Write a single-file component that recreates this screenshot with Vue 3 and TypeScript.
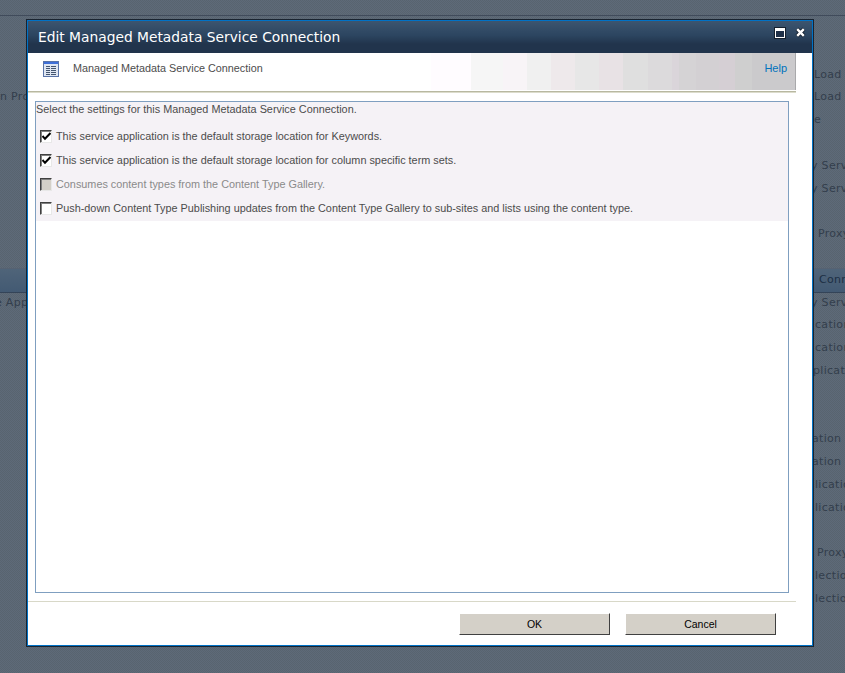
<script setup lang="ts">
interface BgRow { text: string; x: number; cls?: string }
const rightRows: BgRow[] = [
  { text: 'Load', x: 814 }, { text: 'Load', x: 814 }, { text: 'e', x: 814 }, { text: '', x: 0 },
  { text: 'y Serv', x: 811 }, { text: 'y Serv', x: 811 }, { text: '', x: 0 },
  { text: 'Proxy', x: 818 }, { text: '', x: 0 }, { text: 'Conn', x: 819, cls: 'sel' },
  { text: 'y Serv', x: 811 }, { text: 'cation', x: 815 }, { text: 'cation', x: 815 },
  { text: 'plication', x: 813 }, { text: '', x: 0 }, { text: '', x: 0 },
  { text: 'ation', x: 812 }, { text: 'ation', x: 812 }, { text: 'lication', x: 815 },
  { text: 'lication', x: 815 }, { text: '', x: 0 }, { text: 'Proxy', x: 817 },
  { text: 'lection', x: 815 }, { text: 'lection', x: 815 }
]
const settings = [
  { label: 'This service application is the default storage location for Keywords.', checked: true, disabled: false },
  { label: 'This service application is the default storage location for column specific term sets.', checked: true, disabled: false },
  { label: 'Consumes content types from the Content Type Gallery.', checked: false, disabled: true },
  { label: 'Push-down Content Type Publishing updates from the Content Type Gallery to sub-sites and lists using the content type.', checked: false, disabled: false }
]
const bands = [
  { c: '#fffcff', w: 40 }, { c: '#f6f6f6', w: 32 }, { c: '#f8f4f7', w: 24 }, { c: '#f0f0f0', w: 24 },
  { c: '#eee9eb', w: 24 }, { c: '#e7e7e7', w: 24 }, { c: '#e8e2e5', w: 24 }, { c: '#dfdfdf', w: 25 },
  { c: '#dcdadc', w: 24 }, { c: '#dad5da', w: 7 }, { c: '#d5d3d5', w: 17 }, { c: '#d3d0d3', w: 23 },
  { c: '#d5cfd4', w: 16 }, { c: '#cfcfcf', w: 17 }, { c: '#cbcacc', w: 43 }
]
</script>

<template>
  <div class="page">
    <div class="backdrop">
      <div class="top-bar"></div>
      <div class="bg-rows">
        <div v-for="(r, i) in rightRows" :key="i" class="bg-row" :class="r.cls">
          <span v-if="i === 1" class="bg-left">n Proxy</span>
          <span v-if="i === 10" class="bg-left app">e App</span>
          <span v-if="r.text" class="bg-right" :style="{ left: r.x + 'px' }">{{ r.text }}</span>
        </div>
      </div>
    </div>

    <section class="dialog">
      <header class="titlebar">
        <h1>Edit Managed Metadata Service Connection</h1>
        <div class="win-btns">
          <svg width="12" height="12" viewBox="0 0 12 12">
            <rect x="0.5" y="0.5" width="11" height="11" fill="#fff" stroke="#14202e" />
            <rect x="2" y="4" width="8" height="6" fill="#1e3048" />
          </svg>
          <svg width="11" height="11" viewBox="0 0 11 11">
            <path d="M2 2 L9 9 M9 2 L2 9" stroke="#14202e" stroke-width="4" />
            <path d="M2.2 2.2 L8.8 8.8 M8.8 2.2 L2.2 8.8" stroke="#fff" stroke-width="2.4" />
          </svg>
        </div>
      </header>

      <div class="info-band">
        <svg class="list-icon" width="16" height="16" viewBox="0 0 16 16">
          <rect x="0.5" y="0.5" width="15" height="15" fill="#dfe6f2" stroke="#5a74a8" />
          <rect x="1" y="1" width="14" height="2" fill="#3f6fd8" />
          <path d="M3 5.5h4M8 5.5h5M3 7.5h4M8 7.5h5M3 9.5h4M8 9.5h5M3 11.5h4M8 11.5h5M3 13.5h4M8 13.5h5" stroke="#44556f" stroke-width="1" />
        </svg>
        <span class="info-title">Managed Metadata Service Connection</span>
        <div class="shade">
          <i v-for="(b, i) in bands" :key="i" :style="{ background: b.c, width: b.w + 'px' }"></i>
        </div>
        <a class="help">Help</a>
      </div>
      <div class="rule-olive"></div>

      <div class="frame">
        <div class="settings">
          <p class="intro">Select the settings for this Managed Metadata Service Connection.</p>
          <label v-for="s in settings" :key="s.label" class="setting" :class="{ off: s.disabled }">
            <span class="box" :class="{ 'box-off': s.disabled }">
              <svg v-if="s.checked" width="9" height="9" viewBox="0 0 9 9">
                <path d="M0.5 4 L3 6.8 L8.5 1" fill="none" stroke="#000" stroke-width="2" />
              </svg>
            </span>
            <span>{{ s.label }}</span>
          </label>
        </div>
      </div>

      <div class="rule-foot"></div>
      <footer class="actions">
        <button type="button">OK</button>
        <button type="button">Cancel</button>
      </footer>
    </section>
  </div>
</template>

<style>
html, body { margin: 0; background: #5b6776; overflow: hidden; }
</style>

<style scoped>
.page {
  position: relative;
  width: 845px;
  height: 673px;
  overflow: hidden;
  font-family: "Liberation Sans", Arial, sans-serif;
}
.backdrop {
  height: 673px;
  background-color: #5b6776;
  background-image: repeating-conic-gradient(#5e6a79 0 25%, #58646f 0 50%);
  background-size: 2px 2px;
}
.top-bar { height: 15px; border-bottom: 1px solid #404b5b; }
.bg-rows { padding-top: 47.6px; }
.bg-row {
  position: relative;
  height: 22.8px;
  line-height: 22.8px;
  font-family: "DejaVu Sans", sans-serif;
  font-size: 11px;
  letter-spacing: 0.3px;
  color: #333e4c;
  white-space: nowrap;
}
.bg-right { position: absolute; top: 0; }
.bg-left { position: absolute; left: 0; top: 0; }
.bg-left.app { left: -5px; }
.sel {
  background: linear-gradient(#4f6479, #435a73);
  box-shadow: 0 -1px 0 #566272, 0 1px 0 #344458;
  color: #1c2f44;
}

.dialog {
  position: absolute;
  left: 27px;
  top: 20px;
  width: 786px;
  height: 626px;
  box-sizing: border-box;
  display: flex;
  flex-direction: column;
  background: #fff;
  border: 1px solid #0072c6;
  outline: 1px solid #1a2430;
}
.titlebar {
  flex: none;
  height: 32px;
  display: flex;
  align-items: center;
  justify-content: space-between;
  padding: 0 6px 0 10px;
  background: linear-gradient(#3c556f 0, #2c4560 45%, #21344c 72%, #21344c 100%);
}
.titlebar h1 {
  margin: 0;
  font-family: "DejaVu Sans", sans-serif;
  font-weight: normal;
  font-size: 13.8px;
  color: #fff;
  white-space: nowrap;
}
.win-btns { display: flex; gap: 9px; align-self: flex-start; margin-top: 6px; }
.win-btns svg { display: block; }
.info-band {
  position: relative;
  flex: none;
  width: 768px;
  height: 38px;
  display: flex;
  align-items: flex-start;
  box-sizing: border-box;
}
.list-icon { flex: none; margin: 8px 0 0 15px; }
.info-title { margin: 9px 0 0 14px; font-size: 10.8px; line-height: 13px; color: #4c4c4c; white-space: nowrap; position: relative; z-index: 1; }
.shade { position: absolute; right: 0; top: 0; height: 37px; display: flex; border-right: 1px solid #a9a9ab; }
.shade i { display: block; height: 100%; }
.help { position: absolute; right: 9px; top: 9px; font-size: 11px; line-height: 13px; color: #0072bc; }
.rule-olive { flex: none; width: 768px; height: 2px; background: linear-gradient(#b8b8a0 50%, #dcdccc 50%); }
.frame {
  flex: none;
  width: 754px;
  height: 492px;
  box-sizing: border-box;
  margin: 8px 0 0 7px;
  border: 1px solid #7f9fc0;
}
.settings { background: #f5f2f6; height: 119px; }
.intro { margin: 0; height: 22px; line-height: 14px; font-size: 10.85px; color: #4c4c4c; }
.setting {
  display: flex;
  align-items: center;
  height: 24px;
  padding-left: 4px;
  font-size: 10.85px;
  color: #4c4c4c;
  white-space: nowrap;
}
.setting.off { color: #8a8a8a; }
.box {
  flex: none;
  width: 12px;
  height: 13px;
  margin-right: 4px;
  box-sizing: border-box;
  display: flex;
  align-items: center;
  justify-content: center;
  background: #fff;
  border: 1px solid;
  border-color: #404040 #e8e8e8 #e8e8e8 #404040;
  box-shadow: inset 1px 1px 0 #808080;
}
.box-off { background: #d4d0c8; }
.rule-foot { flex: none; width: 768px; height: 1px; margin-top: 8px; background: #d8d8c8; }
.actions {
  flex: none;
  display: flex;
  gap: 15px;
  padding: 11px 0 0 431px;
}
.actions button {
  width: 151px;
  height: 22px;
  padding: 0;
  box-sizing: border-box;
  background: #d4d0c8;
  border: 1px solid;
  border-color: #fff #404040 #404040 #fff;
  font-family: "Liberation Sans", Arial, sans-serif;
  font-size: 10.5px;
  color: #000;
}
</style>
